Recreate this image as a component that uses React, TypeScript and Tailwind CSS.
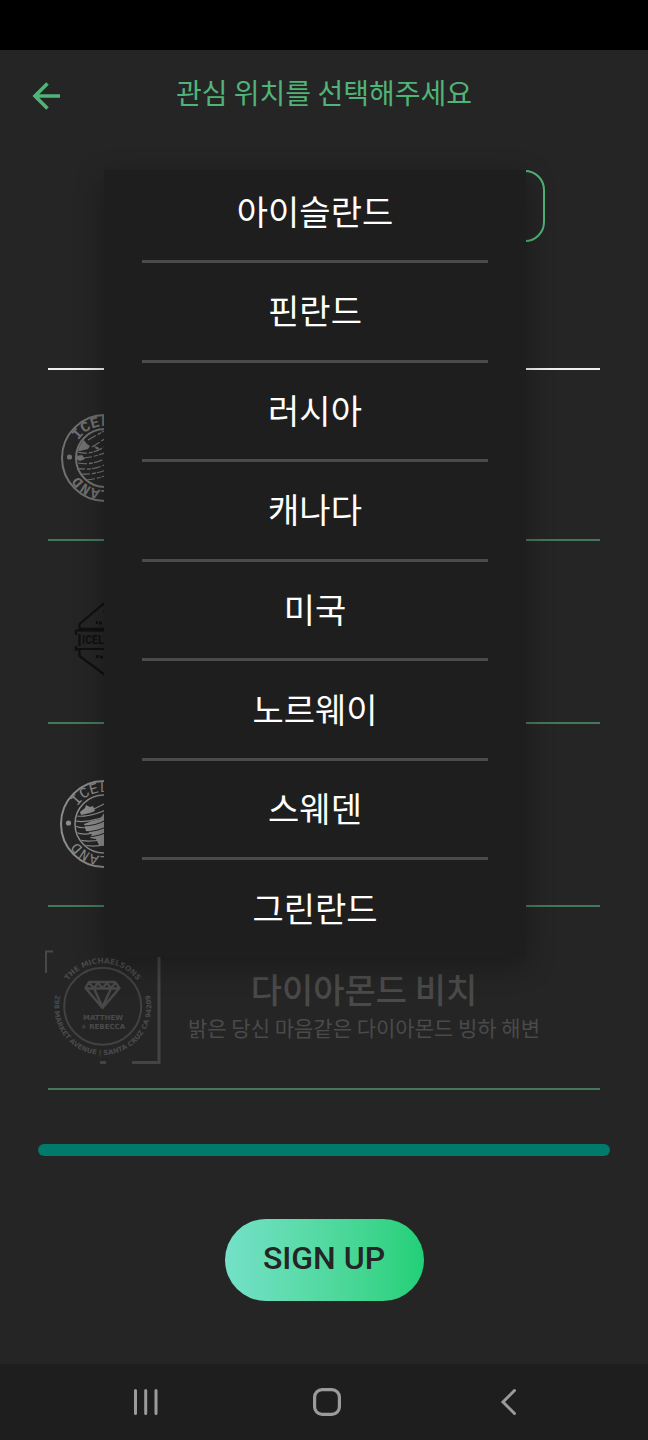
import React from "react";

const countries = ["아이슬란드", "핀란드", "러시아", "캐나다", "미국", "노르웨이", "스웨덴", "그린란드"];

function RoundSeal({ id, rough = false }: { id: string; rough?: boolean }) {
  const color = rough ? "#707070" : "#8c8c8c";
  const cx = rough ? 57 : 56;
  return (
    <svg viewBox="0 0 116 116" className="h-[116px] w-[116px] shrink-0 overflow-visible" aria-hidden="true">
      <defs>
        <path id={`${id}-top`} d={`M${cx - 32} 58a32 32 0 0 1 64 0`} />
        <path id={`${id}-bottom`} d={`M${cx + 32} 58a32 32 0 0 1 -64 0`} />
        <clipPath id={`${id}-clip`}>
          <circle cx={cx} cy="58" r="28" />
        </clipPath>
      </defs>
      <g fill="none" stroke={color}>
        <circle cx={cx} cy="58" r="43" strokeWidth="2" />
        <circle cx={cx} cy="58" r="29" strokeWidth={rough ? 2 : 1.5} />
      </g>
      <circle cx={cx - 35.5} cy="57" r="2.6" fill={color} />
      <g fill={color} fontFamily="'Liberation Mono', monospace" fontSize="15" fontWeight={rough ? 700 : 400} textAnchor="middle">
        <text>
          <textPath href={`#${id}-top`} startOffset="50%">ICELAND</textPath>
        </text>
        <text>
          <textPath href={`#${id}-bottom`} startOffset="50%">ICELAND</textPath>
        </text>
      </g>
      <g clipPath={`url(#${id}-clip)`}>
        {rough ? (
          <>
            <path
              d="M30 42l5 -3l4 5l3 2l-2 3l-8 2l-5 -1zM26 56l8 -1l3 4l-5 2l-5 -2zM27 69l6 3l-1 4l-4 -2zM46 46l4 1l2 3l-4 -1zM58 42l12 -6l8 12l-6 12l-14 2z"
              fill={color}
            />
            <path
              d="M40 40l16 -9M44 47l14 -9M30 52q12 4 28 -6M35 58q12 -1 24 -6M30 63q14 3 30 -6M28 68q16 4 32 -5M33 74q14 1 30 -6M38 80q12 -1 24 -6"
              fill="none"
              stroke={color}
              strokeWidth="1.2"
              strokeDasharray="9 2 4 1"
            />
          </>
        ) : (
          <>
            <path
              d="M32 46l5 -4l1 -3l4 2l3 -1l2 5l-5 2l-9 2zM36 58l8 -3l8 -2l4 -6l8 4l10 -8l8 14l-8 20l-12 4l-11 -2l-3 -6l-6 -1l2 -4l-6 -3z"
              fill={color}
            />
            <path
              d="M29 50q14 2 40 -11M27 55q16 3 44 -10M27 60q12 6 46 -9M27 66q14 7 46 -10M28 73q16 6 42 -5M31 78q20 6 40 -5M40 46l18 -9"
              fill="none"
              stroke={color}
              strokeWidth="1.2"
            />
            <path d="M34 60q14 0 24 -6M34 66q16 0 28 -7M38 71q12 0 26 -7" fill="none" stroke="#252525" strokeWidth="1" />
          </>
        )}
      </g>
    </svg>
  );
}

function HexBadge() {
  return (
    <svg viewBox="0 0 116 116" className="h-[116px] w-[116px] shrink-0" aria-hidden="true">
      <g fill="none" stroke="#101010" strokeWidth="2.2" strokeLinejoin="round">
        <path d="M31.5 47V41L57 19.5L82 41V47" />
        <path d="M31.5 67V73L57 92L82 73V67" />
        <path d="M27 47.5H87V51M28 52V47M27 66H87M28 63V68M31.5 51V63" />
      </g>
      <path d="M32 46.5H82" stroke="#101010" strokeWidth="3.5" />
      <path d="M48 38h2v3h-2zM51 38.5h3v3h-3zM48 72h3v3h-3zM52 72.5h3v3h-3zM55.5 27h2v3h-2z" fill="#101010" />
      <text
        x="34"
        y="61"
        fill="#101010"
        fontFamily="'Roboto Condensed', 'Open Sans Condensed', 'Liberation Sans', sans-serif"
        fontSize="12"
        fontWeight="700"
      >
        ICELAND
      </text>
    </svg>
  );
}

function DiamondLogo() {
  return (
    <svg viewBox="0 0 116 116" className="h-[116px] w-[116px] shrink-0 overflow-visible" aria-hidden="true">
      <defs>
        <path id="diamond-top" d="M11.7 57.3a43 43 0 0 1 86 0" />
        <path id="diamond-around" d="M20.1 23.5A48.5 48.5 0 1 0 89.3 23.5" />
      </defs>
      <path d="M5 2.5H-2V24" fill="none" stroke="#484848" strokeWidth="2" />
      <path d="M111 8V113.5H84M52 113.5h6" fill="none" stroke="#444444" strokeWidth="3" />
      <circle cx="54.7" cy="57.3" r="38.5" fill="none" stroke="#424242" strokeWidth="2" />
      <path
        d="M41 33H67L71.5 39L54.5 59L37.5 39ZM37.5 39.5H71.5M46 39.5L54.5 58L63 39.5M41 34L46 39L50 34L54.5 39L59 34L63 39L67.500 34"
        fill="none"
        stroke="#484848"
        strokeWidth="2.4"
        strokeLinejoin="round"
      />
      <g fill="#4a4a4a" fontFamily="'DejaVu Sans', sans-serif" fontWeight="700" textAnchor="middle">
        <text x="55" y="71" fontSize="7">MATTHEW</text>
        <text x="55" y="80" fontSize="7">+ REBECCA</text>
        <text fontSize="7.5">
          <textPath href="#diamond-top" startOffset="50%">THE MICHAELSONS</textPath>
        </text>
        <text fontSize="6.8">
          <textPath href="#diamond-around" startOffset="50%">298 MARKET AVENUE | SANTA CRUZ CA 94209</textPath>
        </text>
      </g>
    </svg>
  );
}

function PlaceRow({ children }: { children: React.ReactNode }) {
  return <li className="flex items-start border-b-2 border-[#42795a] pb-[23px]">{children}</li>;
}

export default function App() {
  return (
    <div className="flex min-h-screen flex-col bg-[#252525] font-['Noto_Sans_CJK_KR',sans-serif]">
      <div className="h-[50px] bg-black" />
      <header className="grid h-[120px] grid-cols-[48px_1fr_48px] items-start px-6 pt-6 text-[#50b478]">
        <button type="button" aria-label="뒤로" className="flex h-11 w-11 items-center justify-center">
          <svg viewBox="0 0 28 28" className="h-7 w-7" fill="none" stroke="currentColor" strokeWidth="3.6" aria-hidden="true">
            <path d="M28 14H3M15.5 1.5L3 14L15.5 26.5" />
          </svg>
        </button>
        <h1 className="text-center text-[28px] leading-9 font-normal">관심 위치를 선택해주세요</h1>
      </header>

      <main className="flex flex-1 flex-col">
        <div className="relative z-10 mr-[103px] ml-[104px]">
          <button
            type="button"
            aria-haspopup="listbox"
            aria-expanded="true"
            aria-label="관심 위치"
            className="block h-[72px] w-full rounded-[20px] border-2 border-[#50b478]"
          />
          <ul
            role="listbox"
            aria-label="관심 위치"
            className="absolute top-0 right-[19px] left-0 flex h-[787px] flex-col bg-[#1e1e1e] px-[38px] shadow-[0_8px_28px_rgba(0,0,0,0.3)]"
          >
            {countries.map((name, i) => (
              <li
                key={name}
                role="option"
                aria-selected={i === 0}
                className="flex flex-1 items-center justify-center border-b-[3px] border-[#4b4b4b] pb-0.5 text-[34px] leading-[48px] text-white first:grow-0 first:basis-[93px] first:pb-2 last:border-b-0"
              >
                {name}
              </li>
            ))}
          </ul>
        </div>

        <section className="mx-12 mt-[126px]">
          <div className="h-0.5 bg-[#efefef]" />
          <ul className="flex flex-col gap-[42px] pt-[30px]">
            <PlaceRow>
              <RoundSeal id="seal-one" rough />
            </PlaceRow>
            <PlaceRow>
              <HexBadge />
            </PlaceRow>
            <PlaceRow>
              <RoundSeal id="seal-two" />
            </PlaceRow>
            <PlaceRow>
              <DiamondLogo />
              <div className="flex-1 pt-4 pr-[62px] pl-6 text-center whitespace-nowrap text-[#4a4a4a]">
                <h2 className="text-[34px] leading-[48px] font-medium">다이아몬드 비치</h2>
                <p className="flex justify-center text-[21px] leading-7 font-normal">밝은 당신 마음같은 다이아몬드 빙하 해변</p>
              </div>
            </PlaceRow>
          </ul>
        </section>

        <div className="mx-[38px] mt-[54px] h-3 rounded-md bg-[#007a6a]" />

        <button
          type="button"
          className="mt-[63px] mb-[63px] h-[82px] w-[199px] self-center rounded-full bg-linear-to-r from-[#74e1c8] to-[#20d077] pb-1 font-['Roboto',sans-serif] text-[32px] leading-10 font-medium text-[#252525]"
        >
          SIGN UP
        </button>
      </main>

      <nav className="flex h-[76px] items-center justify-between bg-[#1e1e1e] pr-[126px] pl-[132px] text-[#9b9b9b]">
        <button type="button" aria-label="최근 앱">
          <svg viewBox="0 0 28 28" className="h-7 w-7" stroke="currentColor" strokeWidth="3" strokeLinecap="round" aria-hidden="true">
            <path d="M3.5 2.5V25.5M13.7 2.5V25.5M24 2.5V25.5" />
          </svg>
        </button>
        <button type="button" aria-label="홈">
          <svg viewBox="0 0 28 28" className="h-7 w-7" fill="none" stroke="currentColor" strokeWidth="3.2" aria-hidden="true">
            <rect x="1.6" y="1.6" width="24.8" height="24.8" rx="7.5" />
          </svg>
        </button>
        <button type="button" aria-label="뒤로 가기">
          <svg viewBox="0 0 28 28" className="h-7 w-7" fill="none" stroke="currentColor" strokeWidth="3" strokeLinecap="round" aria-hidden="true">
            <path d="M20.5 2.5L9 14L20.5 25.5" />
          </svg>
        </button>
      </nav>
    </div>
  );
}
